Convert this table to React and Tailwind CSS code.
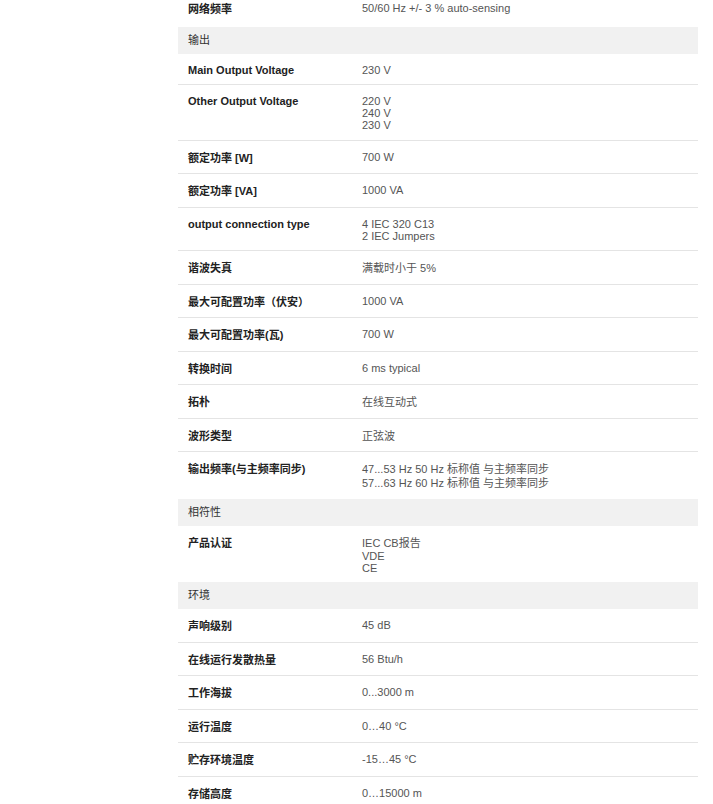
const sections = [
  {
    title: null,
    rows: [["网络频率", ["50/60 Hz +/- 3 % auto-sensing"]]],
  },
  {
    title: "输出",
    rows: [
      ["Main Output Voltage", ["230 V"]],
      ["Other Output Voltage", ["220 V", "240 V", "230 V"]],
      ["额定功率 [W]", ["700 W"]],
      ["额定功率 [VA]", ["1000 VA"]],
      ["output connection type", ["4 IEC 320 C13", "2 IEC Jumpers"]],
      ["谐波失真", ["满载时小于 5%"]],
      ["最大可配置功率（伏安）", ["1000 VA"]],
      ["最大可配置功率(瓦)", ["700 W"]],
      ["转换时间", ["6 ms typical"]],
      ["拓朴", ["在线互动式"]],
      ["波形类型", ["正弦波"]],
      [
        "输出频率(与主频率同步)",
        ["47...53 Hz 50 Hz 标称值 与主频率同步", "57...63 Hz 60 Hz 标称值 与主频率同步"],
      ],
    ],
  },
  {
    title: "相符性",
    rows: [["产品认证", ["IEC CB报告", "VDE", "CE"]]],
  },
  {
    title: "环境",
    rows: [
      ["声响级别", ["45 dB"]],
      ["在线运行发散热量", ["56 Btu/h"]],
      ["工作海拔", ["0...3000 m"]],
      ["运行温度", ["0…40 °C"]],
      ["贮存环境温度", ["-15…45 °C"]],
      ["存储高度", ["0…15000 m"]],
    ],
  },
];

const hasCjk = (s) => /[\u3000-\u9fff\uff00-\uffef]/.test(s);

function Row({ label, values, last, first }) {
  return (
    <div
      className={`flex ${first ? "pt-[8px] pb-[10.5px]" : "pt-[10px] pb-[8.5px]"} ${
        last ? "" : "border-b border-[#e4e4e4]"
      }`}
    >
      <div
        className={`w-[184px] shrink-0 pl-[10px] font-bold text-[#222] ${
          hasCjk(label) ? "leading-[14px]" : "leading-[12px]"
        }`}
      >
        {label}
      </div>
      <div className="flex-1 text-[#555]">
        {values.map((v, i) => (
          <div key={i} className={hasCjk(v) ? "leading-[14px]" : "leading-[12px]"}>
            {v}
          </div>
        ))}
      </div>
    </div>
  );
}

export default function App() {
  return (
    <div className="min-h-screen bg-white overflow-hidden font-['Liberation_Sans','Noto_Sans_CJK_SC',sans-serif] text-[11px]">
      <div className="ml-[178px] w-[520px] -mt-[6px]">
        {sections.map((sec, si) => (
          <div key={si}>
            {sec.title && (
              <div className="h-[27px] flex items-center pl-[10px] bg-[#f1f1f1] text-[#333]">
                {sec.title}
              </div>
            )}
            {sec.rows.map(([label, values], ri) => (
              <Row
                key={ri}
                label={label}
                values={values}
                first={si === 0 && ri === 0}
                last={ri === sec.rows.length - 1 && si !== sections.length - 1}
              />
            ))}
          </div>
        ))}
      </div>
    </div>
  );
}
